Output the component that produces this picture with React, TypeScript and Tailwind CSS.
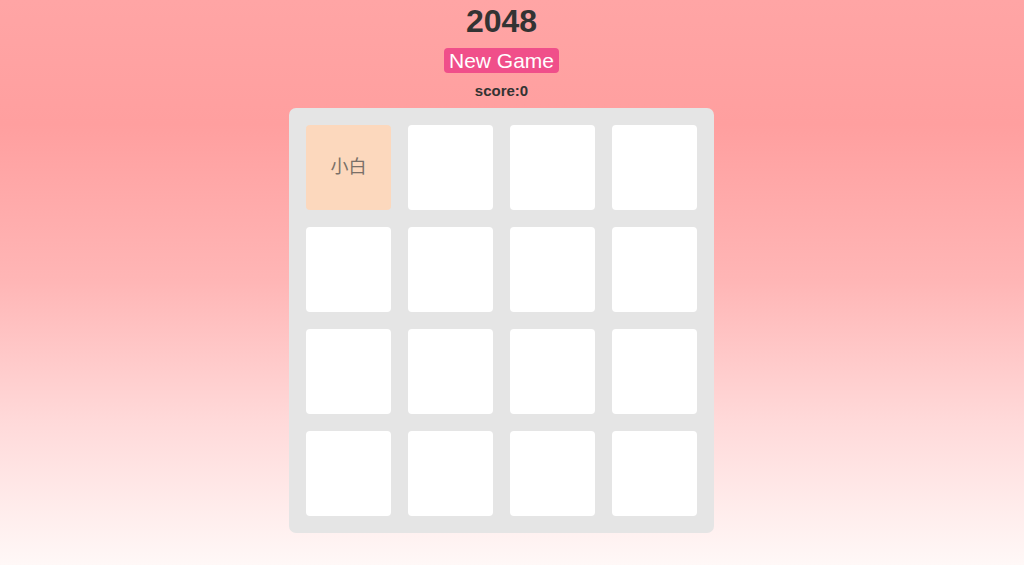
const cells: (string | null)[] = [
  "小白", null, null, null,
  null, null, null, null,
  null, null, null, null,
  null, null, null, null,
]

export default function App() {
  return (
    <div className="flex min-h-[565px] flex-col items-center bg-[linear-gradient(180deg,#ffa5a5_0%,#ff9f9f_22%,#ffb6b6_50%,#ffdada_75%,#fff8f7_100%)] pr-[21px] font-['Liberation_Sans','Noto_Sans_CJK_SC',sans-serif] text-[#333]">
      <h1 className="mt-[3px] text-[32px] font-bold leading-[37px]">2048</h1>
      <button className="mt-[8px] rounded-[4px] bg-[#f04f8a] px-[5px] text-[21px] leading-[25px] text-white">
        New Game
      </button>
      <div className="mt-[9px] text-[15px] font-bold leading-[18px]">score:0</div>
      <div className="mt-[8px] grid grid-cols-[repeat(4,85px)] gap-[17px] rounded-[7px] bg-[#e5e5e5] p-[17px]">
        {cells.map((c, i) => (
          <div
            key={i}
            className={
              c
                ? "flex h-[85px] items-center justify-center rounded-[4px] bg-[#fcd8bd] text-[18px] text-[#7a7068]"
                : "h-[85px] rounded-[4px] bg-white"
            }
          >
            {c}
          </div>
        ))}
      </div>
    </div>
  )
}
